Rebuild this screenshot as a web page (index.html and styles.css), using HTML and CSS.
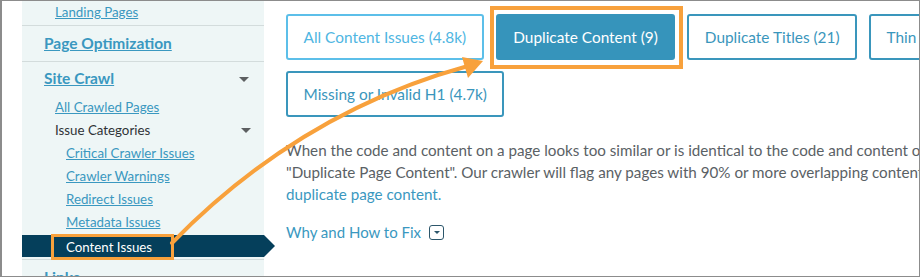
FILE: index.html
```html
<!DOCTYPE html>
<html lang="en">
<head>
  <meta charset="UTF-8" />
  <title>Site Crawl - Content Issues</title>
  <link rel="stylesheet" href="styles.css">
</head>
<body>

  <div class="frame">
    <nav class="sidebar">
      <div class="nav-row nav-top">
        <a href="#" class="lvl2">Landing Pages</a>
      </div>
      <div class="nav-row nav-single">
        <a href="#" class="nav-title">Page Optimization</a>
      </div>
      <div class="nav-group">
        <div class="nav-head">
          <a href="#" class="nav-title">Site Crawl</a>
          <span class="caret"></span>
        </div>
        <ul class="nav-list">
          <li class="lvl2"><a href="#">All Crawled Pages</a></li>
          <li class="lvl2 with-caret"><span class="plain">Issue Categories</span><span class="caret"></span></li>
          <li class="lvl3"><a href="#">Critical Crawler Issues</a></li>
          <li class="lvl3"><a href="#">Crawler Warnings</a></li>
          <li class="lvl3"><a href="#">Redirect Issues</a></li>
          <li class="lvl3"><a href="#">Metadata Issues</a></li>
          <li class="active"><span class="active-label">Content Issues</span></li>
        </ul>
      </div>
      <div class="nav-group">
        <div class="nav-head nav-links">
          <a href="#" class="nav-title">Links</a>
          <span class="caret"></span>
        </div>
      </div>
    </nav>

    <main class="main">
      <div class="filters">
        <button class="filter filter-all">All Content Issues (4.8k)</button>
        <button class="filter filter-on">Duplicate Content (9)</button>
        <button class="filter">Duplicate Titles (21)</button>
        <button class="filter">Thin Content (12)</button>
        <button class="filter">Missing or Invalid H1 (4.7k)</button>
      </div>

      <p class="desc">
        When the code and content on a page looks too similar or is identical to the code and content on another page, we flag it as<br>
        "Duplicate Page Content". Our crawler will flag any pages with 90% or more overlapping content and code. Learn more about<br>
        <a href="#">duplicate page content.</a>
      </p>

      <div class="fix">
        <a href="#">Why and How to Fix</a>
        <span class="fix-toggle"></span>
      </div>
    </main>

    <!-- annotation arrow -->
    <svg class="annot" width="920" height="277" viewBox="0 0 920 277">
      <path d="M172 243 Q 300 112 468 66" fill="none" stroke="#f8a13c" stroke-width="4" stroke-linecap="round" />
      <polygon points="483,61 462,57 468,78" fill="#f8a13c" />
    </svg>
  </div>

</body>
</html>
```

FILE: styles.css
```css
* {
  box-sizing: border-box;
}
body {
  margin: 0;
  font-family: Lato, "Open Sans", sans-serif;
  background: #fff;
}
a {
  color: #3a98c0;
}

.frame {
  position: relative;
  width: 920px;
  height: 277px;
  border: 1px solid #8c8c8c;
  border-left-width: 2px;
  overflow: hidden;
  display: flex;
  padding-left: 20px;
}

/* sidebar */
.sidebar {
  width: 242px;
  flex: none;
  background: #eef6f6;
}
.nav-row {
  border-bottom: 1px solid #d3dcdc;
  display: flex;
  align-items: center;
  padding-bottom: 2px;
}
.nav-top {
  height: 25px;
  font-size: 13.3px;
}
.nav-top .lvl2 {
  padding-left: 33px;
}
.nav-single {
  height: 36px;
  padding-left: 22px;
}
.nav-title {
  font-size: 15.5px;
  font-weight: 700;
}
.nav-group {
  border-bottom: 1px solid #d3dcdc;
  padding-bottom: 2px;
}
.nav-head {
  margin-top: 6px;
  height: 22px;
  display: flex;
  align-items: center;
  justify-content: space-between;
  padding: 0 15px 2px 22px;
}
.nav-head .caret {
  margin-top: 2px;
}
.nav-links {
  margin-top: 7px;
}
.caret {
  width: 0;
  height: 0;
  border-left: 5px solid transparent;
  border-right: 5px solid transparent;
  border-top: 5px solid #5c5f61;
}
.nav-list {
  list-style: none;
  margin: 6px 0 0;
  padding: 0;
  font-size: 13.3px;
}
.nav-list li {
  height: 23px;
  display: flex;
  align-items: center;
  padding-bottom: 2px;
}
.nav-list .lvl2 {
  padding-left: 33px;
}
.nav-list .lvl3 {
  padding-left: 44px;
}
.with-caret {
  justify-content: space-between;
  padding-right: 13px;
}
.with-caret .caret {
  margin-top: 2px;
}
.plain {
  color: #2f3336;
}
.nav-list .active {
  position: relative;
  height: 22px;
  margin-top: 1px;
  padding-bottom: 0;
  background: #053f5b;
  padding-left: 29px;
}
.nav-list .active::after {
  content: "";
  position: absolute;
  right: -11px;
  top: 0;
  border-top: 11px solid transparent;
  border-bottom: 11px solid transparent;
  border-left: 11px solid #053f5b;
}
.active-label {
  display: inline-block;
  color: #fff;
  line-height: 20px;
  border: 3px solid #f8a13c;
  padding: 0 19px 0 12px;
  margin-top: 2px;
}

/* main */
.main {
  flex: none;
  width: 900px;
  padding: 13px 0 0 22px;
}
.filters {
  display: flex;
  flex-wrap: wrap;
  gap: 11px 12px;
}
.filter {
  height: 46px;
  padding: 0 15.5px;
  border: 2px solid #3a96bc;
  border-radius: 3px;
  background: #fff;
  color: #3a96bc;
  font-family: inherit;
  font-size: 15.4px;
}
.filter-all {
  border-color: #5cbfe9;
  color: #4fb6e2;
}
.filter-on {
  position: relative;
  background: #3694bb;
  border-color: #3694bb;
  color: #fff;
}
.filter-on::after {
  content: "";
  position: absolute;
  top: -10px;
  right: -10px;
  bottom: -11px;
  left: -8px;
  border: 4px solid #f8a13c;
}

.desc {
  margin: 22px 0 0;
  font-size: 15.2px;
  line-height: 22px;
  color: #5a6165;
  white-space: nowrap;
}
.desc a {
  text-decoration: none;
}
.fix {
  margin-top: 16px;
  height: 22px;
  display: flex;
  align-items: center;
  gap: 8px;
  font-size: 15px;
}
.fix a {
  text-decoration: none;
}
.fix-toggle {
  width: 15px;
  height: 15px;
  border: 1.5px solid #2c566b;
  border-radius: 3px;
  display: flex;
  align-items: center;
  justify-content: center;
}
.fix-toggle::before {
  content: "";
  border-left: 3px solid transparent;
  border-right: 3px solid transparent;
  border-top: 3px solid #2c566b;
}

.annot {
  position: absolute;
  left: -2px;
  top: -1px;
  pointer-events: none;
}
```
